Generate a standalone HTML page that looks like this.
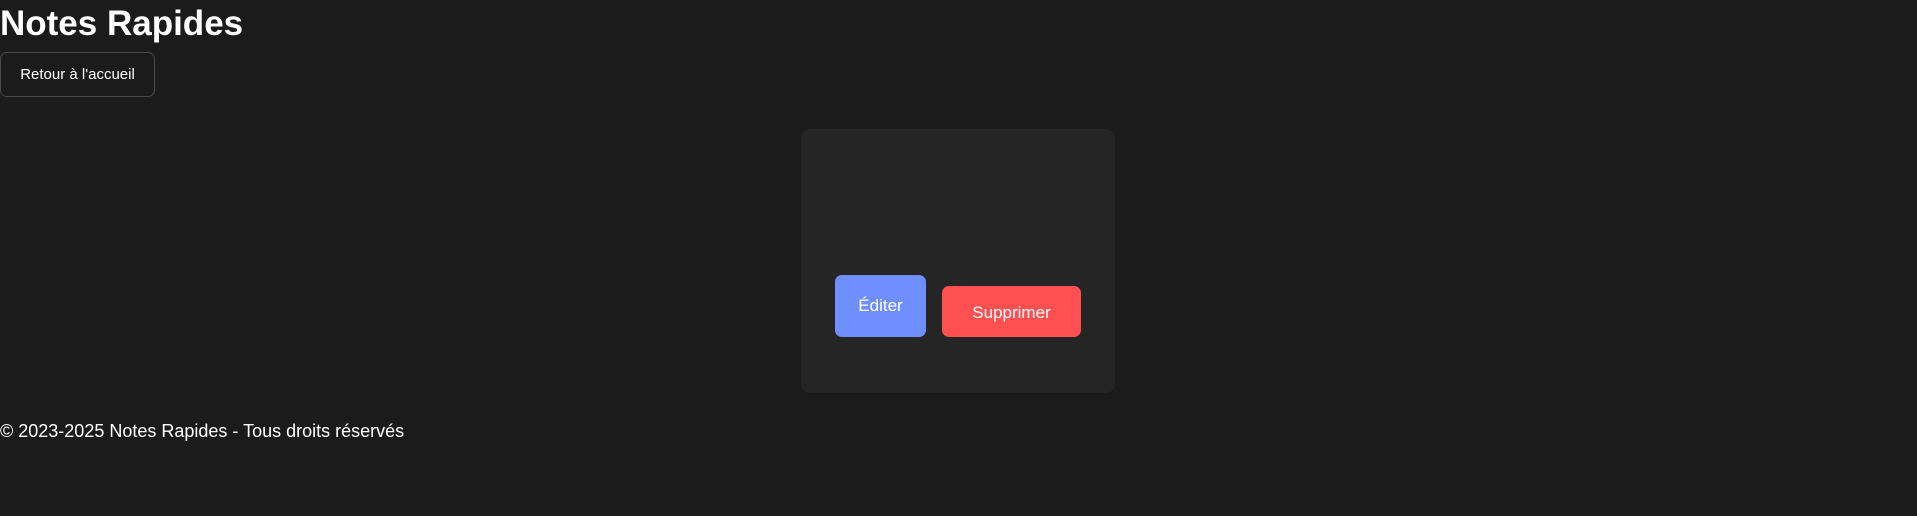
<!DOCTYPE html>
<html><head><meta charset="utf-8"><style>
html,body{margin:0;padding:0;background:#1b1b1b;width:1917px;height:516px;overflow:hidden;font-family:"Liberation Sans",sans-serif;color:#fff}
h1{position:absolute;left:0;top:2px;margin:0;font-size:35px;font-weight:bold;line-height:44px;letter-spacing:0px}
.back{position:absolute;left:0;top:52px;width:153px;height:43px;border:1px solid #4a4a4a;border-radius:7px;box-sizing:content-box;font-size:15px;line-height:43px;text-align:center}
.card{position:absolute;left:801px;top:129px;width:314px;height:264px;background:#252525;border-radius:9px}
.ed{position:absolute;left:835px;top:275px;width:91px;height:62px;background:#708ffe;border-radius:7px;font-size:17px;line-height:62px;text-align:center}
.sup{position:absolute;left:942px;top:286px;width:139px;height:51px;background:#fe4f51;border-radius:7px;font-size:17px;line-height:54px;text-align:center}
.foot{position:absolute;left:0;top:419px;font-size:18px;line-height:24px}
</style></head><body>
<h1>Notes Rapides</h1>
<div class="back">Retour à l'accueil</div>
<div class="card"></div>
<div class="ed">Éditer</div>
<div class="sup">Supprimer</div>
<div class="foot">© 2023-2025 Notes Rapides - Tous droits réservés</div>
</body></html>
